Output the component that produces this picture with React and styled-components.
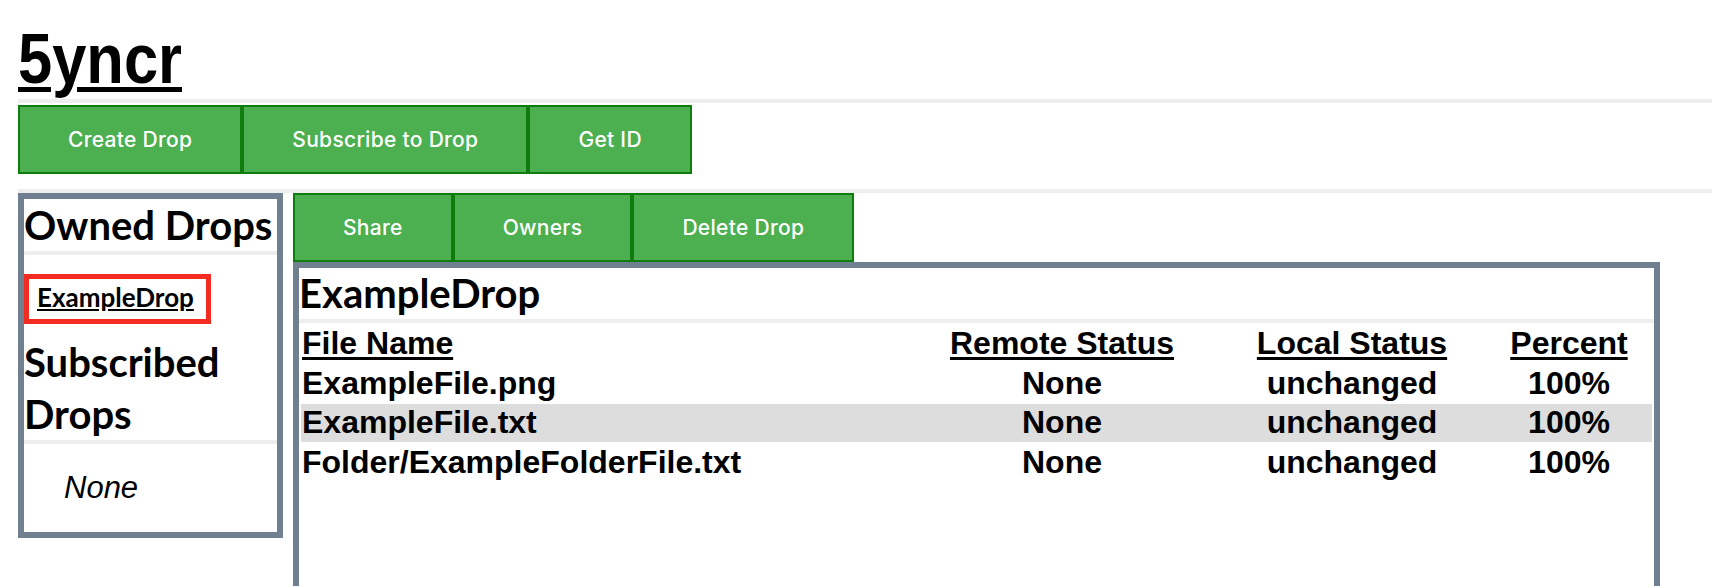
import styled, { createGlobalStyle } from "styled-components"

const GlobalStyle = createGlobalStyle`
  body {
    margin: 8px;
    background: #fff;
    color: #000;
    font-family: "Liberation Sans", Arial, sans-serif;
  }
`

const Page = styled.div`
  margin: 10px;
`

const Title = styled.h1`
  margin: 0;
  padding-top: 1px;
  font-family: "Liberation Sans", Arial, sans-serif;
  font-size: 70px;
  font-weight: bold;
  line-height: 80px;
  border-bottom: 4px solid #eee;
`

const TitleLink = styled.span`
  display: inline-block;
  text-decoration: underline;
  text-decoration-thickness: 5px;
  text-underline-offset: 4px;
  transform: scaleX(0.878);
  transform-origin: left center;
`

const Toolbar = styled.div`
  display: flex;
  margin-top: ${(p) => p.$top || 0}px;
`

const ActionButton = styled.button`
  background-color: #4caf50;
  border: 2px solid #0e7d0e;
  color: #fff;
  font-family: Inter, "Liberation Sans", sans-serif;
  font-size: 21px;
  font-weight: 500;
  letter-spacing: 0.3px;
  line-height: 25px;
  padding: 20px 48px;
  margin: 0;
  cursor: pointer;
`

const Workspace = styled.div`
  display: flex;
  align-items: flex-start;
  gap: 10px;
  margin-top: 15px;
  border-top: 4px solid #eee;
`

const Sidebar = styled.div`
  width: 253px;
  border: 6px solid #708090;
`

const Heading = styled.h2`
  margin: 0;
  font-family: Lato, "Liberation Sans", sans-serif;
  font-size: 40px;
  font-weight: 700;
  line-height: ${(p) => p.$lh || 52}px;
  border-bottom: 4px solid #eee;
`

const DropList = styled.div`
  display: flex;
  padding: 19px 0 12px;
`

const DropLink = styled.a`
  border: 5px solid #f32b20;
  padding: 2px 12px 6px 8px;
  font-family: Lato, "Liberation Sans", sans-serif;
  font-size: 26px;
  font-weight: 700;
  line-height: 32px;
  color: #000;
  text-decoration: underline;
  text-underline-offset: 2px;
`

const EmptyList = styled.ul`
  margin: 26px 0;
  padding-left: 40px;
  list-style: none;
  li {
    font-style: italic;
    font-size: 31px;
  }
`

const MainColumn = styled.div`
  width: 1367px;
  display: flex;
  flex-direction: column;
`

const DropPanel = styled.div`
  border: 6px solid #708090;
  min-height: 420px;
`

const FileTable = styled.table`
  width: calc(100% - 4px);
  margin: 0 2px;
  table-layout: fixed;
  border-spacing: 0 2px;
  font-size: 32px;
  font-weight: bold;
  line-height: 35.5px;
  th {
    text-decoration: underline;
    text-underline-offset: 3px;
    padding: 1px;
  }
  td {
    padding: 1px;
    white-space: nowrap;
  }
`

const Cell = styled.td`
  text-align: ${(p) => (p.$left ? "left" : "center")};
`

const HeadCell = styled.th`
  text-align: ${(p) => (p.$left ? "left" : "center")};
`

const Row = styled.tr`
  background: ${(p) => (p.$selected ? "#ddd" : "transparent")};
`

const files = [
  { name: "ExampleFile.png", remote: "None", local: "unchanged", percent: "100%" },
  { name: "ExampleFile.txt", remote: "None", local: "unchanged", percent: "100%", selected: true },
  { name: "Folder/ExampleFolderFile.txt", remote: "None", local: "unchanged", percent: "100%" },
]

const App = () => {
  return (
    <Page>
      <GlobalStyle />
      <Title>
        <TitleLink>5yncr</TitleLink>
      </Title>
      <Toolbar $top={2}>
        <ActionButton>Create Drop</ActionButton>
        <ActionButton>Subscribe to Drop</ActionButton>
        <ActionButton>Get ID</ActionButton>
      </Toolbar>
      <Workspace>
        <Sidebar>
          <Heading>Owned Drops</Heading>
          <DropList>
            <DropLink href="#">ExampleDrop</DropLink>
          </DropList>
          <Heading>Subscribed Drops</Heading>
          <EmptyList>
            <li>None</li>
          </EmptyList>
        </Sidebar>
        <MainColumn>
          <Toolbar>
            <ActionButton>Share</ActionButton>
            <ActionButton>Owners</ActionButton>
            <ActionButton>Delete Drop</ActionButton>
          </Toolbar>
          <DropPanel>
            <Heading $lh={51}>ExampleDrop</Heading>
            <FileTable>
              <colgroup>
                <col style={{ width: 605 }} />
                <col style={{ width: 312 }} />
                <col style={{ width: 268 }} />
                <col style={{ width: 166 }} />
              </colgroup>
              <thead>
                <tr>
                  <HeadCell $left>File Name</HeadCell>
                  <HeadCell>Remote Status</HeadCell>
                  <HeadCell>Local Status</HeadCell>
                  <HeadCell>Percent</HeadCell>
                </tr>
              </thead>
              <tbody>
                {files.map((f) => (
                  <Row key={f.name} $selected={f.selected}>
                    <Cell $left>{f.name}</Cell>
                    <Cell>{f.remote}</Cell>
                    <Cell>{f.local}</Cell>
                    <Cell>{f.percent}</Cell>
                  </Row>
                ))}
              </tbody>
            </FileTable>
          </DropPanel>
        </MainColumn>
      </Workspace>
    </Page>
  )
}

export default App
